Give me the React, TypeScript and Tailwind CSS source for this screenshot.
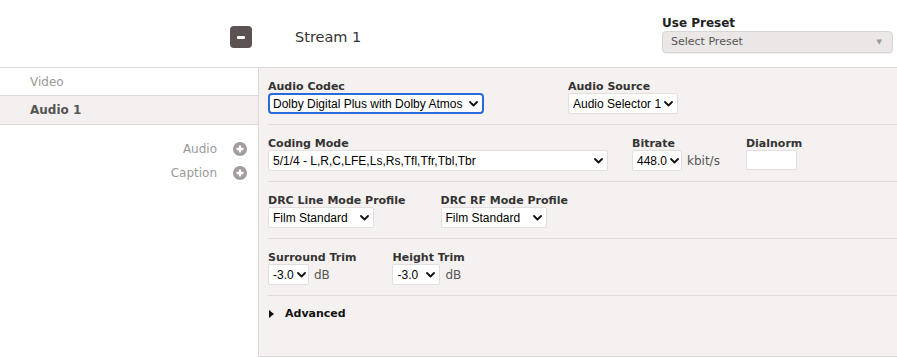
import type { ReactNode } from 'react'

function Chevron() {
  return (
    <svg width="9" height="6" viewBox="0 0 9 6" className="shrink-0">
      <path d="M1 1l3.5 3.5L8 1" fill="none" stroke="#111" strokeWidth="1.8" strokeLinecap="round" strokeLinejoin="round" />
    </svg>
  )
}

function FakeSelect({ value, width, focused = false }: { value: string; width: number; focused?: boolean }) {
  return (
    <div
      className={
        focused
          ? 'h-[21px] flex items-center justify-between gap-[3px] bg-white rounded-[4px] border-2 border-[#2a6ad8] pl-[3px] pr-[4px]'
          : 'h-[21px] flex items-center justify-between gap-[3px] bg-white rounded-[2px] border border-[#e3dfde] pl-[4px] pr-[4px]'
      }
      style={{ width }}
    >
      <span className="font-['Liberation_Sans',Arial,sans-serif] text-[12px] text-black whitespace-nowrap">{value}</span>
      <Chevron />
    </div>
  )
}

function Label({ children }: { children: ReactNode }) {
  return <div className="text-[11px] leading-[13px] font-bold text-[#333] whitespace-nowrap">{children}</div>
}

function Unit({ children }: { children: ReactNode }) {
  return <span className="ml-[5px] text-[12px] text-[#555]">{children}</span>
}

function AddIcon() {
  return (
    <svg width="14" height="14" viewBox="0 0 14 14">
      <circle cx="7" cy="7" r="7" fill="#a19b9a" />
      <path d="M7 3.5v7M3.5 7h7" stroke="#fff" strokeWidth="2.4" />
    </svg>
  )
}

export default function App() {
  return (
    <div className="w-[897px] h-[358px] bg-white overflow-hidden font-['DejaVu_Sans',Verdana,sans-serif] text-[#333]">
      {/* Header */}
      <header className="flex h-[67px]">
        <div className="w-[258px] flex justify-end pt-[26px] pr-[6px]">
          <button className="w-[22px] h-[22px] rounded-[4px] bg-[#5b5352] flex items-center justify-center">
            <span className="block w-[8px] h-[3px] rounded-[1px] bg-white" />
          </button>
        </div>
        <div className="pl-[37px] pt-[26px] text-[14.5px] leading-[22px] text-[#333]">Stream 1</div>
        <div className="ml-auto w-[231px] mr-[4px] pt-[16px]">
          <div className="text-[12px] leading-[14px] font-bold text-[#222]">Use Preset</div>
          <div className="mt-[1px] h-[22px] rounded-[4px] bg-[#ebe7e6] border border-[#d9d5d4] shadow-[0_1px_1px_rgba(0,0,0,0.06)] flex items-center justify-between pl-[8px] pr-[10px]">
            <span className="text-[11px] text-[#555]">Select Preset</span>
            <span className="text-[7px] text-[#999]">▼</span>
          </div>
        </div>
      </header>

      <div className="flex">
        {/* Left nav */}
        <nav className="w-[258px] shrink-0">
          <div className="h-[29px] border-t border-b border-[#ddd9d8] flex items-center pl-[30px] text-[12px] text-[#999]">Video</div>
          <div className="h-[29px] border-b border-[#ddd9d8] bg-[#f4f0ef] flex items-center pl-[30px] text-[12px] font-bold text-[#555]">Audio 1</div>
          <div className="flex flex-col items-end pr-[11px] pt-[12px]">
            {['Audio', 'Caption'].map((item) => (
              <div key={item} className="h-[24px] flex items-center gap-[16px]">
                <span className="text-[12px] text-[#999]">{item}</span>
                <AddIcon />
              </div>
            ))}
          </div>
        </nav>

        {/* Audio settings panel */}
        <section className="flex-1 h-[290px] bg-[#f5f1f0] border-l border-t border-b border-[#ddd9d8]">
          <div className="ml-[9px] flex pt-[12px] pb-[10px] border-b border-[#dfdbda]">
            <div className="w-[216px]">
              <Label>Audio Codec</Label>
              <FakeSelect value="Dolby Digital Plus with Dolby Atmos" width={216} focused />
            </div>
            <div className="ml-[84px]">
              <Label>Audio Source</Label>
              <FakeSelect value="Audio Selector 1" width={110} />
            </div>
          </div>

          <div className="ml-[9px] flex pt-[12px] pb-[10px] border-b border-[#dfdbda]">
            <div>
              <Label>Coding Mode</Label>
              <FakeSelect value="5/1/4 - L,R,C,LFE,Ls,Rs,Tfl,Tfr,Tbl,Tbr" width={340} />
            </div>
            <div className="ml-[24px]">
              <Label>Bitrate</Label>
              <div className="flex items-center">
                <FakeSelect value="448.0" width={50} />
                <Unit>kbit/s</Unit>
              </div>
            </div>
            <div className="ml-[26px]">
              <Label>Dialnorm</Label>
              <div className="w-[51px] h-[20px] bg-white border border-[#e3dfde] rounded-[2px]" />
            </div>
          </div>

          <div className="ml-[9px] flex pt-[12px] pb-[10px] border-b border-[#dfdbda]">
            <div>
              <Label>DRC Line Mode Profile</Label>
              <FakeSelect value="Film Standard" width={106} />
            </div>
            <div className="ml-[35px]">
              <Label>DRC RF Mode Profile</Label>
              <FakeSelect value="Film Standard" width={106} />
            </div>
          </div>

          <div className="ml-[9px] flex pt-[12px] pb-[10px] border-b border-[#dfdbda]">
            <div>
              <Label>Surround Trim</Label>
              <div className="flex items-center">
                <FakeSelect value="-3.0" width={41} />
                <Unit>dB</Unit>
              </div>
            </div>
            <div className="ml-[36px]">
              <Label>Height Trim</Label>
              <div className="flex items-center">
                <FakeSelect value="-3.0" width={48} />
                <Unit>dB</Unit>
              </div>
            </div>
          </div>

          <div className="ml-[10px] pt-[11px] flex items-center gap-[11px]">
            <svg width="5" height="8" viewBox="0 0 5 8">
              <path d="M0 0L5 4L0 8Z" fill="#111" />
            </svg>
            <span className="text-[11px] leading-[13px] font-bold text-[#111]">Advanced</span>
          </div>
        </section>
      </div>
    </div>
  )
}
